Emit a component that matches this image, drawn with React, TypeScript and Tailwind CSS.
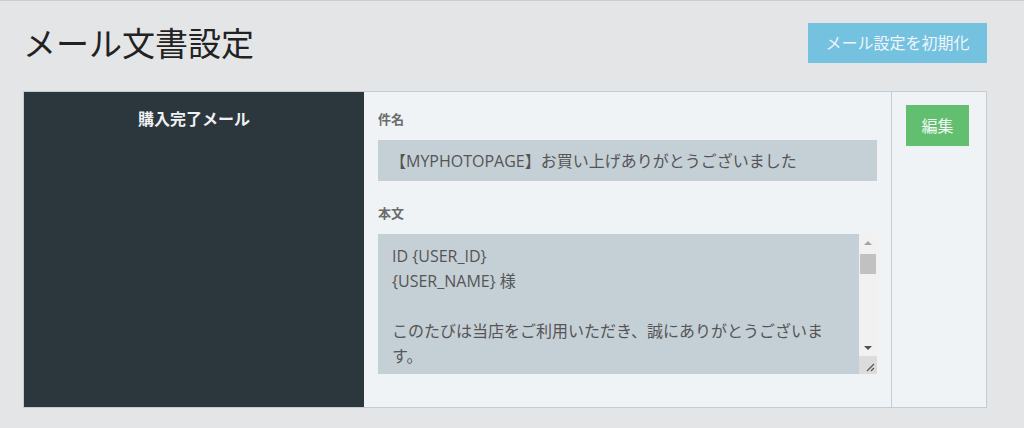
import React from "react";

const body = `ID {USER_ID}
{USER_NAME} 様

このたびは当店をご利用いただき、誠にありがとうございます。`;

function ScrollBar() {
  return (
    <div className="flex w-[18px] flex-col bg-[#f1f1f1]">
      <div className="flex h-[17px] items-center justify-center">
        <div className="h-0 w-0 border-x-[4px] border-b-[4px] border-x-transparent border-b-[#a3a3a3]" />
      </div>
      <div className="flex-1 px-[1px]">
        <div className="mt-[3px] h-[20px] bg-[#c1c1c1]" />
      </div>
      <div className="flex h-[17px] items-center justify-center">
        <div className="h-0 w-0 border-x-[4px] border-t-[4px] border-x-transparent border-t-[#505050]" />
      </div>
      <div className="relative h-[18px] bg-[#dcdcdc]">
        <svg className="absolute right-[2px] bottom-[2px]" width="10" height="10" viewBox="0 0 10 10">
          <path d="M9 2 L2 9 M9 6 L6 9" stroke="#555" strokeWidth="1.2" />
        </svg>
      </div>
    </div>
  );
}

export default function App() {
  return (
    <div
      className="min-h-[428px] w-[1024px] border-t border-[#c9ced3] bg-[#e4e5e7] pt-[21px]"
      style={{ fontFamily: '"Open Sans", "Noto Sans CJK JP", sans-serif' }}
    >
      {/* Header */}
      <div className="flex h-[41px] items-center justify-between pl-[23px] pr-[37px]">
        <h1 className="mt-[2px] text-[33px] leading-none font-normal text-[#222]">メール文書設定</h1>
        <button className="h-[40px] w-[179px] bg-[#74c1e0] text-[16px] text-[#eef6fa]">
          メール設定を初期化
        </button>
      </div>

      {/* Card */}
      <div className="mt-[28px] ml-[23px] flex h-[317px] w-[964px] border border-[#c3ccd3]">
        <div className="w-[340px] bg-[#2c363d] pt-[15px] text-center">
          <span className="text-[16px] font-bold text-[#eef1f3]">購入完了メール</span>
        </div>

        <div className="flex w-[527px] flex-col bg-[#eff3f6] px-[14px] pt-[18px]">
          <label className="text-[13px] leading-[18px] font-bold text-[#6b6b6b]">件名</label>
          <div className="mt-[12px] flex h-[41px] items-center bg-[#c5cfd6] pl-[12px] text-[16px] text-[#555]">
            【MYPHOTOPAGE】お買い上げありがとうございました
          </div>
          <label className="mt-[23px] text-[13px] leading-[18px] font-bold text-[#6b6b6b]">本文</label>
          <div className="mt-[12px] flex h-[140px] bg-[#c5cfd6]">
            <div className="flex-1 overflow-hidden pt-[10px] pr-[27px] pl-[14px] text-[16px] leading-[25px] whitespace-pre-wrap text-[#555]">
              {body}
            </div>
            <ScrollBar />
          </div>
        </div>

        <div className="flex-1 border-l border-[#c3ccd3] bg-[#eff3f6] pt-[13px] pl-[14px]">
          <button className="h-[41px] w-[63px] bg-[#62bf70] text-[16px] text-[#f2faf3]">編集</button>
        </div>
      </div>
    </div>
  );
}
